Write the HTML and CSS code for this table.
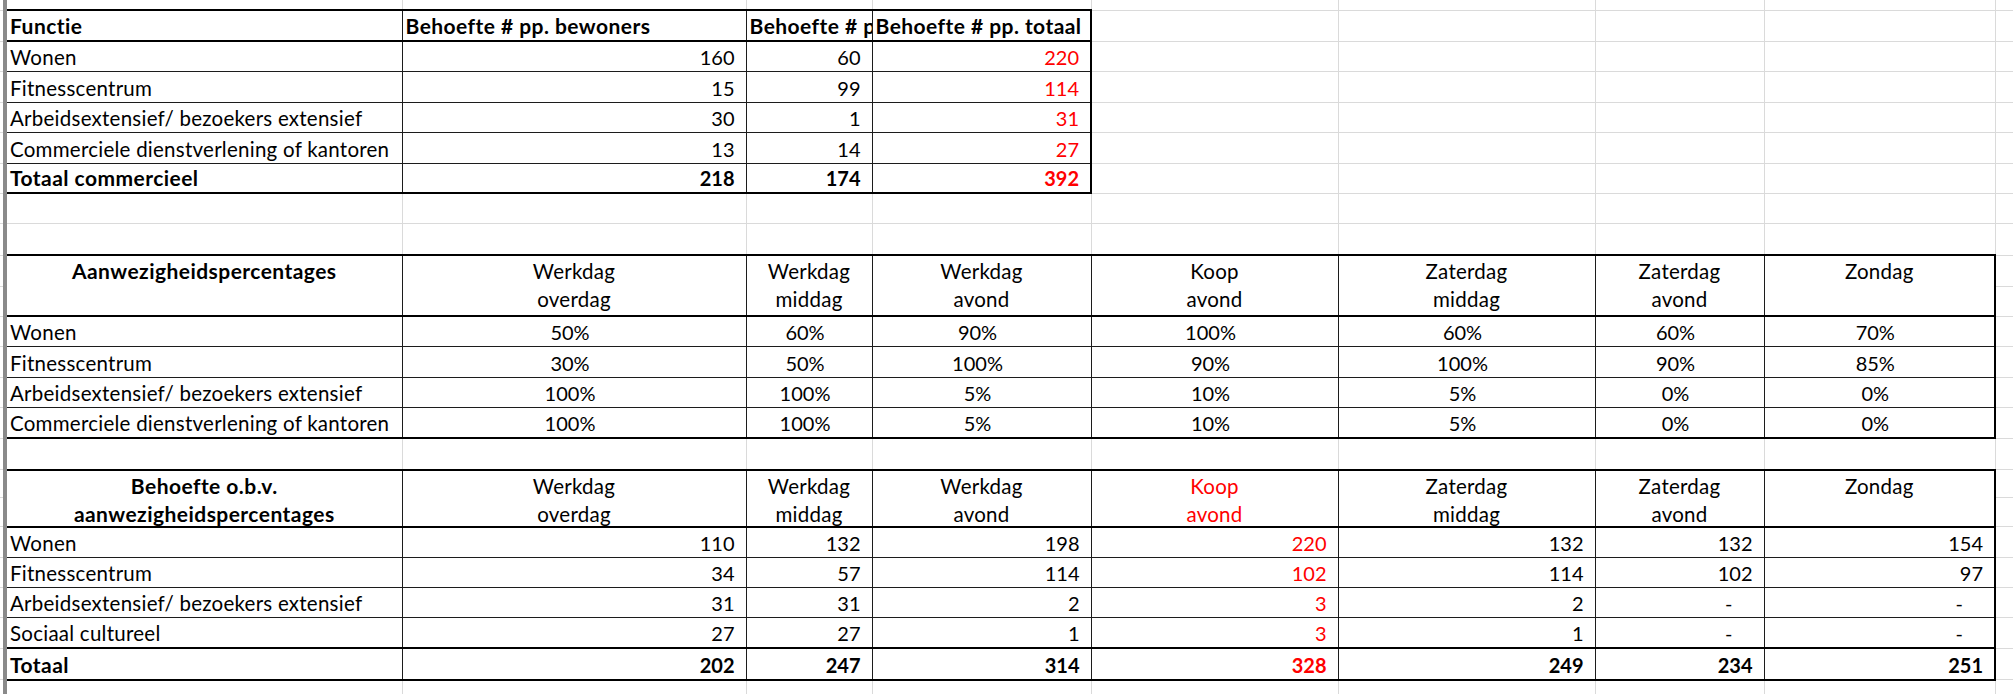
FILE: index.html
```html
<!DOCTYPE html>
<html lang="nl">
<head>
<meta charset="utf-8">
<title>Parkeerbehoefte</title>
<link rel="stylesheet" href="styles.css">
</head>
<body>
<table class="sheet">
<colgroup>
<col class="w0"><col class="wa"><col class="wb"><col class="wc"><col class="wd"><col class="we"><col class="wf"><col class="wg"><col class="wh"><col class="wi">
</colgroup>
<tbody>
<tr class="y10 r0"><td class="edge"></td><td></td><td></td><td></td><td></td><td></td><td></td><td></td><td></td><td></td></tr>

<tr class="y31">
<td class="edge"></td>
<td class="c top bot b">Functie</td>
<td class="c top bot b">Behoefte # pp. bewoners</td>
<td class="c top bot b">Behoefte # p</td>
<td class="c top bot rt b">Behoefte # pp. totaal</td>
<td></td><td></td><td></td><td></td><td></td>
</tr>
<tr class="y305">
<td class="edge"></td>
<td class="c">Wonen</td>
<td class="c num">160</td>
<td class="c num">60</td>
<td class="c num rt red">220</td>
<td></td><td></td><td></td><td></td><td></td>
</tr>
<tr class="y305">
<td class="edge"></td>
<td class="c">Fitnesscentrum</td>
<td class="c num">15</td>
<td class="c num">99</td>
<td class="c num rt red">114</td>
<td></td><td></td><td></td><td></td><td></td>
</tr>
<tr class="y305">
<td class="edge"></td>
<td class="c">Arbeidsextensief/ bezoekers extensief</td>
<td class="c num">30</td>
<td class="c num">1</td>
<td class="c num rt red">31</td>
<td></td><td></td><td></td><td></td><td></td>
</tr>
<tr class="y305">
<td class="edge"></td>
<td class="c">Commerciele dienstverlening of kantoren</td>
<td class="c num">13</td>
<td class="c num">14</td>
<td class="c num rt red">27</td>
<td></td><td></td><td></td><td></td><td></td>
</tr>
<tr class="y30">
<td class="edge"></td>
<td class="c bot b">Totaal commercieel</td>
<td class="c bot num b">218</td>
<td class="c bot num b">174</td>
<td class="c bot num rt red b">392</td>
<td></td><td></td><td></td><td></td><td></td>
</tr>

<tr class="y305"><td class="edge"></td><td></td><td></td><td></td><td></td><td></td><td></td><td></td><td></td><td></td></tr>
<tr class="y315"><td class="edge"></td><td></td><td></td><td></td><td></td><td></td><td></td><td></td><td></td><td></td></tr>

<tr class="y31">
<td class="edge"></td>
<td class="c top bot hd b" rowspan="2">Aanwezigheidspercentages</td>
<td class="c top bot hd" rowspan="2">Werkdag<br>overdag</td>
<td class="c top bot hd" rowspan="2">Werkdag<br>middag</td>
<td class="c top bot hd" rowspan="2">Werkdag<br>avond</td>
<td class="c top bot hd" rowspan="2">Koop<br>avond</td>
<td class="c top bot hd" rowspan="2">Zaterdag<br>middag</td>
<td class="c top bot hd" rowspan="2">Zaterdag<br>avond</td>
<td class="c top bot hd rt" rowspan="2">Zondag</td>
<td></td>
</tr>
<tr class="y30"><td class="edge"></td><td></td></tr>
<tr class="y305">
<td class="edge"></td>
<td class="c">Wonen</td>
<td class="c pct">50%</td><td class="c pct">60%</td><td class="c pct">90%</td><td class="c pct">100%</td><td class="c pct">60%</td><td class="c pct">60%</td><td class="c pct rt">70%</td>
<td></td>
</tr>
<tr class="y305">
<td class="edge"></td>
<td class="c">Fitnesscentrum</td>
<td class="c pct">30%</td><td class="c pct">50%</td><td class="c pct">100%</td><td class="c pct">90%</td><td class="c pct">100%</td><td class="c pct">90%</td><td class="c pct rt">85%</td>
<td></td>
</tr>
<tr class="y305">
<td class="edge"></td>
<td class="c">Arbeidsextensief/ bezoekers extensief</td>
<td class="c pct">100%</td><td class="c pct">100%</td><td class="c pct">5%</td><td class="c pct">10%</td><td class="c pct">5%</td><td class="c pct">0%</td><td class="c pct rt">0%</td>
<td></td>
</tr>
<tr class="y305">
<td class="edge"></td>
<td class="c bot">Commerciele dienstverlening of kantoren</td>
<td class="c bot pct">100%</td><td class="c bot pct">100%</td><td class="c bot pct">5%</td><td class="c bot pct">10%</td><td class="c bot pct">5%</td><td class="c bot pct">0%</td><td class="c bot pct rt">0%</td>
<td></td>
</tr>

<tr class="y315"><td class="edge"></td><td></td><td></td><td></td><td></td><td></td><td></td><td></td><td></td><td></td></tr>

<tr class="y28">
<td class="edge"></td>
<td class="c top bot hd b" rowspan="2"><div class="clip">Behoefte o.b.v.<br>aanwezigheidspercentages</div></td>
<td class="c top bot hd" rowspan="2"><div class="clip">Werkdag<br>overdag</div></td>
<td class="c top bot hd" rowspan="2"><div class="clip">Werkdag<br>middag</div></td>
<td class="c top bot hd" rowspan="2"><div class="clip">Werkdag<br>avond</div></td>
<td class="c top bot hd red" rowspan="2"><div class="clip">Koop<br>avond</div></td>
<td class="c top bot hd" rowspan="2"><div class="clip">Zaterdag<br>middag</div></td>
<td class="c top bot hd" rowspan="2"><div class="clip">Zaterdag<br>avond</div></td>
<td class="c top bot hd rt" rowspan="2"><div class="clip">Zondag</div></td>
<td></td>
</tr>
<tr class="y29"><td class="edge"></td><td></td></tr>
<tr class="y305">
<td class="edge"></td>
<td class="c">Wonen</td>
<td class="c num">110</td><td class="c num">132</td><td class="c num">198</td><td class="c num red">220</td><td class="c num">132</td><td class="c num">132</td><td class="c num rt">154</td>
<td></td>
</tr>
<tr class="y30">
<td class="edge"></td>
<td class="c">Fitnesscentrum</td>
<td class="c num">34</td><td class="c num">57</td><td class="c num">114</td><td class="c num red">102</td><td class="c num">114</td><td class="c num">102</td><td class="c num rt">97</td>
<td></td>
</tr>
<tr class="y305">
<td class="edge"></td>
<td class="c">Arbeidsextensief/ bezoekers extensief</td>
<td class="c num">31</td><td class="c num">31</td><td class="c num">2</td><td class="c num red">3</td><td class="c num">2</td><td class="c num dash">-</td><td class="c num dash rt">-</td>
<td></td>
</tr>
<tr class="y305">
<td class="edge"></td>
<td class="c">Sociaal cultureel</td>
<td class="c num">27</td><td class="c num">27</td><td class="c num">1</td><td class="c num red">3</td><td class="c num">1</td><td class="c num dash">-</td><td class="c num dash rt">-</td>
<td></td>
</tr>
<tr class="y315">
<td class="edge"></td>
<td class="c top bot b">Totaal</td>
<td class="c top bot num b">202</td><td class="c top bot num b">247</td><td class="c top bot num b">314</td><td class="c top bot num b red">328</td><td class="c top bot num b">249</td><td class="c top bot num b">234</td><td class="c top bot num b rt">251</td>
<td></td>
</tr>

<tr class="y30"><td class="edge"></td><td></td><td></td><td></td><td></td><td></td><td></td><td></td><td></td><td></td></tr>
</tbody>
</table>
</body>
</html>
```

FILE: styles.css
```css
html, body {
  margin: 0;
  padding: 0;
  background: #ffffff;
}

body {
  width: 2013px;
  height: 694px;
  overflow: hidden;
}

.sheet {
  border-collapse: collapse;
  table-layout: fixed;
  width: 2055px;
  font-family: "Lato", "Liberation Sans", sans-serif;
  font-size: 20px;
  color: #000000;
}

.w0 { width: 5px; }
.wa { width: 397px; }
.wb { width: 344px; }
.wc { width: 126px; }
.wd { width: 219px; }
.we { width: 247px; }
.wf { width: 257px; }
.wg { width: 169px; }
.wh { width: 231px; }
.wi { width: 60px; }

.y10 { height: 10px; }
.y28 { height: 28px; }
.y29 { height: 29px; }
.y30 { height: 30px; }
.y305 { height: 30.5px; }
.y31 { height: 31px; }
.y315 { height: 31.5px; }

.sheet td {
  border: 1px solid #dadada;
  padding: 0 11px 2px 3px;
  font-size: 20.5px;
  line-height: 24px;
  letter-spacing: 0.25px;
  vertical-align: bottom;
  white-space: nowrap;
  overflow: hidden;
  text-align: left;
}

.r0 > td {
  border-top: 0;
}

.sheet td.edge {
  border-left: 0;
  border-right: 4px solid #8a8a8a;
  padding: 0;
}

.sheet td.c {
  border: 1px solid #1c1c1c;
}

.sheet td.top { border-top: 2px solid #000000; }
.sheet td.bot { border-bottom: 2px solid #000000; }
.sheet td.rt { border-right: 2px solid #000000; }

.sheet td.b {
  font-weight: 700;
  font-size: 21px;
  letter-spacing: 0.45px;
}

.red { color: #ff0000; }

.sheet td.num {
  text-align: right;
  font-size: 20px;
  letter-spacing: 0;
}

.sheet td.num.b {
  font-size: 20px;
  letter-spacing: 0;
}

.sheet td.dash { padding-right: 31px; }

.sheet td.pct {
  text-align: center;
  font-size: 20px;
  letter-spacing: 0;
}

.sheet td.hd {
  vertical-align: top;
  text-align: center;
  line-height: 28px;
  padding: 1px 3px 0 3px;
}

.clip {
  height: 54px;
  overflow: hidden;
}
```
